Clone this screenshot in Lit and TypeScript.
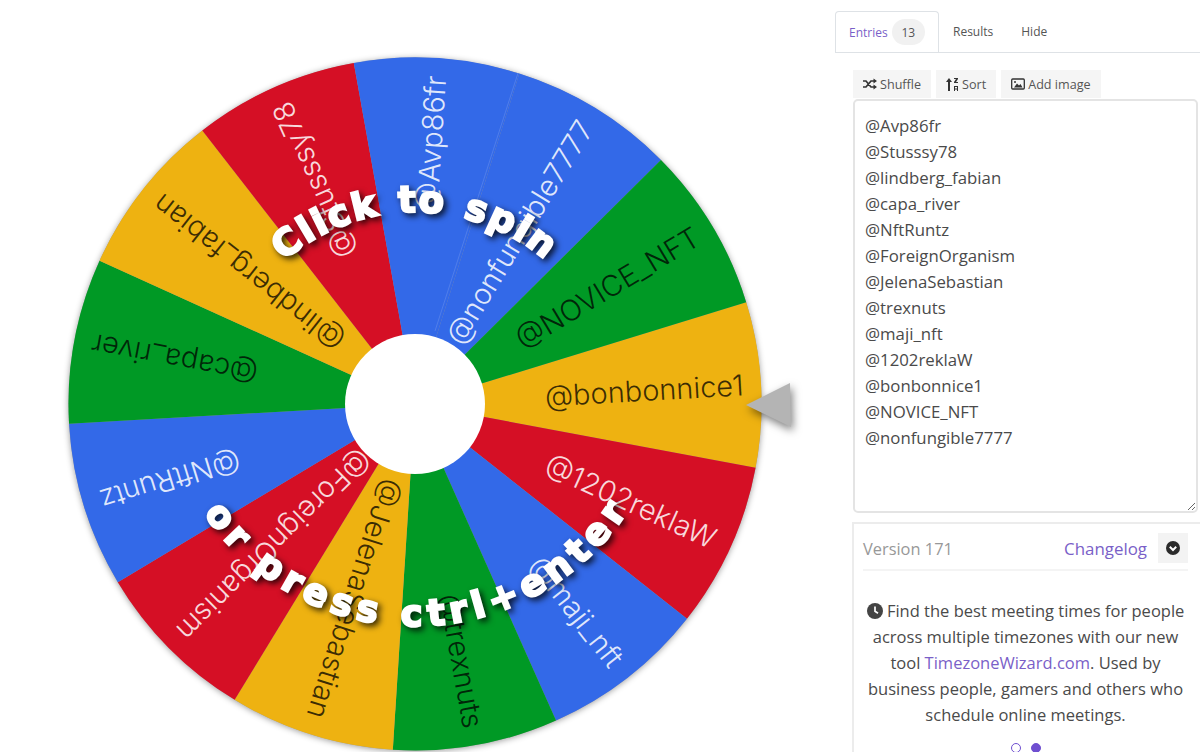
import { LitElement, html, css, svg } from "lit";
import { customElement } from "lit/decorators.js";

const C = { red: "#d50f25", blue: "#3369e8", yellow: "#eeb211", green: "#009925" };
const ENTRIES = [
  "@Avp86fr", "@Stusssy78", "@lindberg_fabian", "@capa_river", "@NftRuntz",
  "@ForeignOrganism", "@JelenaSebastian", "@trexnuts", "@maji_nft", "@1202reklaW",
  "@bonbonnice1", "@NOVICE_NFT", "@nonfungible7777",
];
const SLICES: [string, string][] = [
  ["@bonbonnice1", C.yellow], ["@1202reklaW", C.red], ["@maji_nft", C.blue], ["@trexnuts", C.green],
  ["@JelenaSebastian", C.yellow], ["@ForeignOrganism", C.red], ["@NftRuntz", C.blue], ["@capa_river", C.green],
  ["@lindberg_fabian", C.yellow], ["@Stusssy78", C.red], ["@Avp86fr", C.blue], ["@nonfungible7777", C.blue], ["@NOVICE_NFT", C.green],
];
const CX = 415, CY = 404, R = 346.5, STEP = 360 / 13, START = -3.25;
const pt = (deg: number, r: number) => {
  const a = (deg * Math.PI) / 180;
  return `${(CX + r * Math.cos(a)).toFixed(2)} ${(CY + r * Math.sin(a)).toFixed(2)}`;
};

@customElement("spin-wheel")
class SpinWheel extends LitElement {
  static styles = css`
    :host { display: block; width: 835px; height: 752px; flex: none; }
    svg { display: block; }
    .label { font-family: Inter, sans-serif; font-weight: 300; font-size: 29px; }
    .light { fill: #fff; fill-opacity: 0.85; }
    .dark { fill: #000; fill-opacity: 0.75; }
    .rim { fill: #999; filter: drop-shadow(0 1px 3px rgba(0, 0, 0, 0.4)); }
    .pointer { fill: #b4b4b4; filter: drop-shadow(2px 4px 4px rgba(0, 0, 0, 0.5)); }
    .call { font-family: "DejaVu Sans", sans-serif; font-weight: 700; font-size: 36.5px;
      fill: #fff; stroke: #fff; stroke-width: 2.4px; filter: drop-shadow(3px 3px 3px rgba(0, 0, 0, 0.8)); }
    .call.top { letter-spacing: 2.2px; word-spacing: 3px; }
    .call.bottom { letter-spacing: 6px; }
    .seam { stroke: rgba(255, 255, 255, 0.14); stroke-width: 1; }
  `;
  render() {
    return html`<svg width="835" height="752" viewBox="0 0 835 752">
      <defs>
        <path id="arc-top" d="M ${CX - 200} 412 A 200 200 0 0 1 ${CX + 200} 412"></path>
        <path id="arc-bottom" d="M ${CX - 254} 372 A 254 254 0 0 0 ${CX + 254} 372"></path>
      </defs>
      <circle class="rim" cx=${CX} cy=${CY} r=${R}></circle>
      ${SLICES.map(([, color], i) => {
        const mid = START + i * STEP;
        const a = mid - STEP / 2, b = mid + STEP / 2;
        return svg`<path fill=${color} d="M ${CX} ${CY} L ${pt(a, R)} A ${R} ${R} 0 0 1 ${pt(b, R)} Z"></path>`;
      })}
      <line class="seam" x1=${CX + 20} y1=${CY - 73} x2=${CX + 103} y2=${CY - 331}></line>
      ${SLICES.map(([name, color], i) => {
        const tone = color === C.yellow || color === C.green ? "dark" : "light";
        return svg`<text class="label ${tone}" transform="rotate(${START + i * STEP} ${CX} ${CY})"
          x=${CX + 329} y=${CY + 10} text-anchor="end">${name}</text>`;
      })}
      <circle cx=${CX} cy=${CY} r="70" fill="#fff"></circle>
      <polygon class="pointer" points="746,405 790,383 791,427"></polygon>
      <text class="call top"><textPath href="#arc-top" startOffset="50%" text-anchor="middle">Click to spin</textPath></text>
      <text class="call bottom"><textPath href="#arc-bottom" startOffset="50.5%" text-anchor="middle">or press ctrl+enter</textPath></text>
    </svg>`;
  }
}

@customElement("side-panel")
class SidePanel extends LitElement {
  static styles = css`
    :host { display: block; flex: 1; min-width: 0; height: 752px; overflow: hidden; color: #4a4a4a;
      font-family: "Open Sans", sans-serif; }
    .tabs { display: flex; align-items: stretch; height: 41px; margin-top: 11px; border-bottom: 1px solid #dee2e6;
      font-size: 12px; }
    .tab { display: flex; align-items: center; padding: 0 14px; color: #555; }
    .tab.active { width: 104px; box-sizing: border-box; height: 41px; color: #7a5fc8; border: 1px solid #dee2e6;
      border-bottom: 0; border-radius: 4px 4px 0 0; background: #fff; gap: 4px; padding: 0 13px; }
    .badge { display: flex; align-items: center; justify-content: center; width: 36px; height: 26px;
      border-radius: 13px; background: #f1f1f1; color: #555; }
    .tools { display: flex; gap: 5px; margin: 17px 0 0 18px; height: 28px; }
    .btn { display: flex; align-items: center; gap: 3px; height: 28px; padding: 0 10px; box-sizing: border-box;
      background: #f5f5f5; font-size: 12.6px; color: #555; white-space: nowrap; }
    .btn svg { display: block; }
    .entries { display: block; box-sizing: border-box; width: 345px; height: 414px; margin: 1px 0 0 18px;
      padding: 12px 10px; border: 2px solid #e4e4e4; border-radius: 5px; outline: none; resize: vertical;
      font: 16.8px/26px "Open Sans", sans-serif; color: #4a4a4a; background: #fff; }
    .card { box-sizing: border-box; width: 349px; margin: 9px 0 0 17px; height: 240px; padding: 9px 13px 0 9px;
      border: 2px solid #ececec; border-right: 0; border-bottom: 0; }
    .head { display: flex; align-items: center; height: 30px; padding-bottom: 6px; border-bottom: 2px solid #f4f4f4;
      font-size: 16.4px; }
    .ver { color: #989898; flex: 1; }
    .link { color: #7a5fc8; }
    .head .link { font-size: 16.9px; }
    .fold { display: flex; align-items: center; justify-content: center; width: 30px; height: 30px; margin-left: 11px;
      background: #f3f3f3; }
    .msg { margin: 27px 0 0; text-align: center; font-size: 16.5px; line-height: 26px; color: #4a4a4a; }
    .msg svg { vertical-align: -2px; }
    .dots { display: flex; justify-content: center; gap: 10px; margin-top: 15px; }
    .dot { width: 10px; height: 10px; box-sizing: border-box; border-radius: 50%; border: 1px solid #6f4fd0; }
    .dot.on { background: #6f4fd0; }
  `;
  render() {
    return html`
      <div class="tabs">
        <div class="tab active">Entries <span class="badge">13</span></div>
        <div class="tab">Results</div>
        <div class="tab">Hide</div>
      </div>
      <div class="tools">
        <div class="btn">
          <svg width="14" height="12" viewBox="0 0 14 12" fill="none" stroke="#333" stroke-width="1.7">
            <path d="M0 3h3l5 6h3M0 9h3l5-6h3"></path>
            <path d="M10.5 0.5 14 3l-3.500 2.500zM10.500 6.500 14 9l-3.500 2.500z" fill="#333" stroke="none"></path>
          </svg>
          Shuffle
        </div>
        <div class="btn">
          <svg width="13" height="13" viewBox="0 0 13 13" fill="#333">
            <path d="M3 0 6 4H4v9H2V4H0zM8 0h4v1l-2 3h2v1H8V4l2-3H8zM8 8h4v5h-1v-1.500H9V13H8zM9 9v1.500h2V9z"></path>
          </svg>
          Sort
        </div>
        <div class="btn">
          <svg width="14" height="12" viewBox="0 0 14 12">
            <rect x="0.700" y="1" width="12.600" height="10" rx="1" fill="none" stroke="#333" stroke-width="1.300"></rect>
            <path d="M3 9.500 6 5.500l2 2 1.500-1.500L11.500 9.500z" fill="#333"></path>
            <circle cx="4" cy="4" r="1" fill="#333"></circle>
          </svg>
          Add image
        </div>
      </div>
      <textarea class="entries" spellcheck="false" .value=${ENTRIES.join("\n")}></textarea>
      <div class="card">
        <div class="head">
          <span class="ver">Version 171</span>
          <span class="link">Changelog</span>
          <span class="fold">
            <svg width="14" height="14" viewBox="0 0 14 14">
              <circle cx="7" cy="7" r="7" fill="#2b2b2b"></circle>
              <path d="M3.800 5.800 7 9l3.200-3.200" fill="none" stroke="#fff" stroke-width="2"></path>
            </svg>
          </span>
        </div>
        <p class="msg">
          <svg width="16" height="16" viewBox="0 0 16 16">
            <circle cx="8" cy="8" r="8" fill="#444"></circle>
            <path d="M8 3.500V8.300L11 10.300" fill="none" stroke="#fff" stroke-width="1.700"></path>
          </svg>
          Find the best meeting times for people across multiple timezones with our new tool
          <span class="link">TimezoneWizard.com</span>. Used by business people, gamers and others who schedule online meetings.
        </p>
        <div class="dots"><span class="dot"></span><span class="dot on"></span></div>
      </div>
    `;
  }
}

@customElement("app-root")
class AppRoot extends LitElement {
  static styles = css`
    :host { display: flex; width: 1200px; height: 752px; overflow: hidden; background: #fff; }
  `;
  render() {
    return html`<spin-wheel></spin-wheel><side-panel></side-panel>`;
  }
}
